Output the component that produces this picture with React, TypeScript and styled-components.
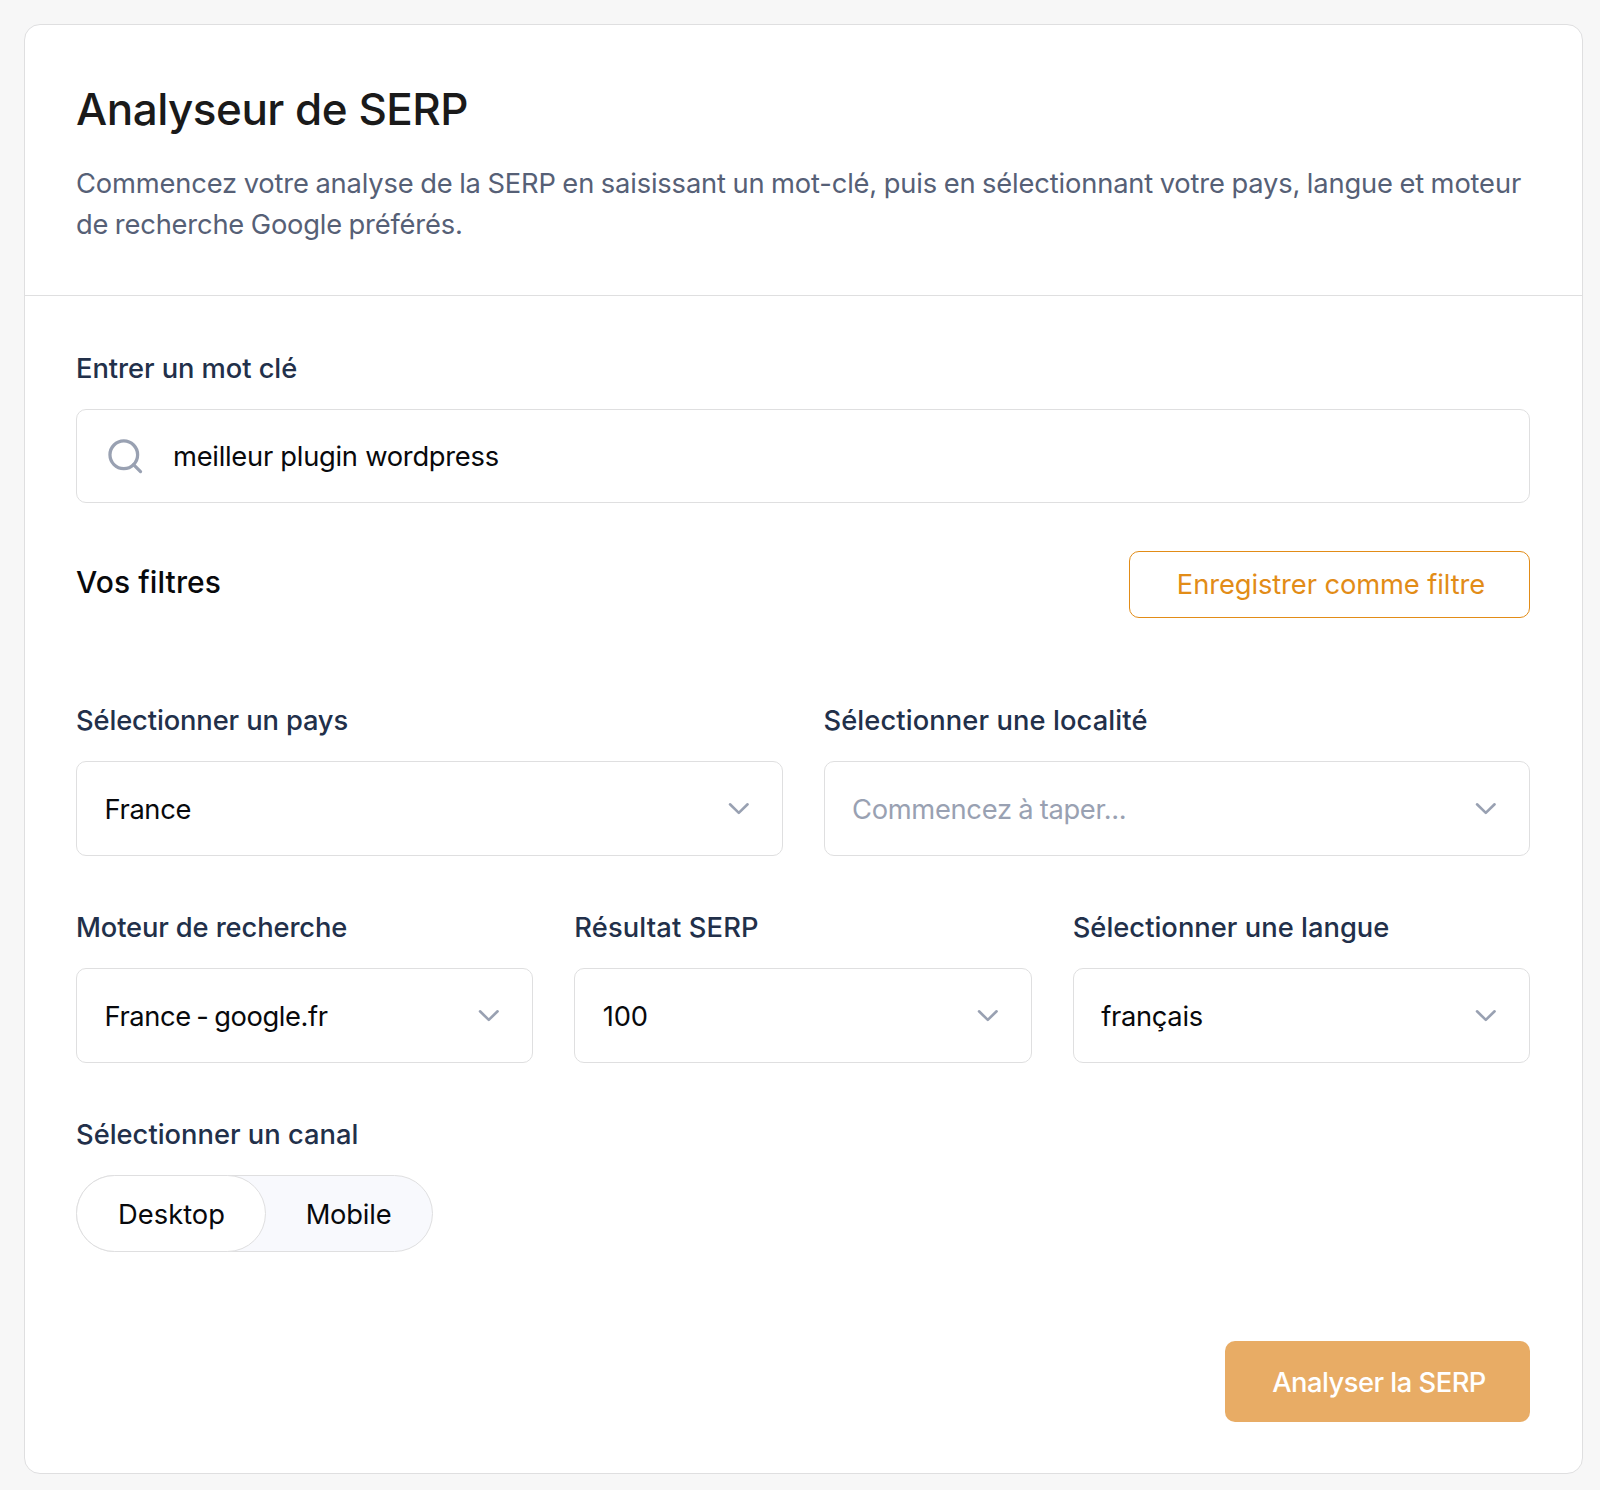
import React from "react";
import styled, { createGlobalStyle, css } from "styled-components";

const line = "#dfdfe0";
const navy = "#22304a";
const muted = "#99a1b2";
const accent = "#e28c17";

const GlobalStyle = createGlobalStyle`
  *, *::before, *::after { box-sizing: border-box; }
  body {
    margin: 0;
    background: #f7f7f7;
    font-family: Inter, "Liberation Sans", sans-serif;
    font-size: 27.3px;
    color: #08090c;
    -webkit-font-smoothing: antialiased;
  }
  h1, h2, p { margin: 0; font-weight: inherit; font-size: inherit; }
  button { font: inherit; color: inherit; cursor: pointer; }
`;

const Page = styled.main`
  padding: 24px 17px 16px 24px;
`;

const Card = styled.section`
  display: flex;
  flex-direction: column;
  height: 1450px;
  background: #fff;
  border: 1px solid ${line};
  border-radius: 16px;
`;

const Header = styled.header`
  padding: 56px 51px 50px;
  border-bottom: 1px solid ${line};
`;

const Title = styled.h1`
  && {
    font-size: 44px;
    font-weight: 500;
  }
  line-height: 56px;
  letter-spacing: -0.5px;
  color: #1a1a1a;
`;

const DescriptionLine = styled.span<{ $tracking: number }>`
  display: block;
  white-space: nowrap;
  letter-spacing: ${(p) => p.$tracking}px;
  word-spacing: -0.9px;
`;

const Description = styled.p`
  margin-top: 26px;
  line-height: 41px;
  color: #566076;
`;

const Body = styled.div`
  display: flex;
  flex-direction: column;
  flex: 1;
  padding: 54px 52px 51px 51px;
`;

const FieldBlock = styled.div`
  display: flex;
  flex-direction: column;
  min-width: 0;
`;

const Label = styled.label<{ $tracking: number }>`
  margin-bottom: 22px;
  line-height: 37px;
  font-weight: 500;
  white-space: nowrap;
  letter-spacing: ${(p) => p.$tracking}px;
  color: ${navy};
`;

const fieldBox = css`
  display: flex;
  align-items: center;
  border: 1px solid ${line};
  border-radius: 10px;
  background: #fff;
`;

const SearchBox = styled.div`
  ${fieldBox}
  height: 94px;
  padding: 0 28px;
`;

const SearchIcon = styled.svg`
  flex: none;
  width: 41px;
  height: 41px;
  margin-right: 27px;
`;

const Value = styled.span<{ $tracking: number; $wordGap?: number; $placeholder?: boolean }>`
  white-space: nowrap;
  letter-spacing: ${(p) => p.$tracking}px;
  word-spacing: ${(p) => p.$wordGap ?? 0}px;
  color: ${(p) => (p.$placeholder ? muted : "#08090c")};
`;

const SelectBox = styled.div`
  ${fieldBox}
  justify-content: space-between;
  height: 95px;
  padding: 0 32px 0 27.5px;

  ${Value} {
    padding-top: 2px;
  }
`;

const Chevron = styled.svg`
  flex: none;
  width: 23px;
  height: 14px;
`;

const FilterBar = styled.div`
  display: flex;
  justify-content: space-between;
  align-items: flex-start;
  margin-top: 48px;
`;

const FilterTitle = styled.h2`
  && {
    font-size: 30px;
    font-weight: 500;
  }
  line-height: 62px;
  letter-spacing: 0.09px;
`;

const SaveButton = styled.button`
  width: 401px;
  height: 67px;
  padding: 0 0 0 3px;
  border: 1px solid ${accent};
  border-radius: 10px;
  background: #fff;
  && { color: ${accent}; }
  letter-spacing: -0.09px;
`;

const Grid = styled.div<{ $columns: number; $top: number }>`
  display: grid;
  grid-template-columns: repeat(${(p) => p.$columns}, minmax(0, 1fr));
  gap: 41px;
  margin-top: ${(p) => p.$top}px;
`;

const ChannelBlock = styled(FieldBlock)`
  align-items: flex-start;
  margin-top: 53px;
`;

const Toggle = styled.div`
  display: flex;
  width: 357px;
  height: 77px;
  border: 1px solid ${line};
  border-radius: 39px;
  background: #f8f9fd;
`;

const ToggleOption = styled.button<{ $active?: boolean; $tracking: number }>`
  height: 77px;
  margin: -1px;
  padding: 2px 0 0 1px;
  border: 1px solid ${(p) => (p.$active ? line : "transparent")};
  border-radius: 39px;
  background: ${(p) => (p.$active ? "#fff" : "transparent")};
  width: ${(p) => (p.$active ? 190 : 168)}px;
  letter-spacing: ${(p) => p.$tracking}px;
`;

const Actions = styled.div`
  display: flex;
  justify-content: flex-end;
  margin-top: 89px;
`;

const SubmitButton = styled.button`
  width: 305px;
  height: 81px;
  padding: 2px 0 0 3px;
  border: 0;
  border-radius: 10px;
  background: #e8ac65;
  && {
    color: #fff;
    font-weight: 500;
  }
  letter-spacing: -0.49px;
`;

type SelectProps = {
  label: string;
  labelTracking: number;
  value: string;
  valueTracking: number;
  wordGap?: number;
  placeholder?: boolean;
};

function Select({ label, labelTracking, value, valueTracking, wordGap, placeholder }: SelectProps) {
  return (
    <FieldBlock>
      <Label $tracking={labelTracking}>{label}</Label>
      <SelectBox>
        <Value $tracking={valueTracking} $wordGap={wordGap} $placeholder={placeholder}>
          {value}
        </Value>
        <Chevron viewBox="0 0 23 14" fill="none">
          <path
            d="M3 2.3l8.8 8.6 8.8-8.6"
            stroke={muted}
            strokeWidth="2.6"
            strokeLinecap="round"
            strokeLinejoin="round"
          />
        </Chevron>
      </SelectBox>
    </FieldBlock>
  );
}

export default function App() {
  return (
    <>
      <GlobalStyle />
      <Page>
        <Card>
          <Header>
            <Title>Analyseur de SERP</Title>
            <Description>
              <DescriptionLine $tracking={-0.148}>
                Commencez votre analyse de la SERP en saisissant un mot-clé, puis en sélectionnant
                votre pays, langue et moteur
              </DescriptionLine>
              <DescriptionLine $tracking={-0.18}>de recherche Google préférés.</DescriptionLine>
            </Description>
          </Header>
          <Body>
            <FieldBlock>
              <Label $tracking={-0.06}>Entrer un mot clé</Label>
              <SearchBox>
                <SearchIcon viewBox="0 0 24 24" fill="none" stroke={muted} strokeWidth="1.9" strokeLinecap="round">
                  <circle cx="11" cy="11" r="8.1" />
                  <path d="M20.8 20.8l-4.1-4.1" />
                </SearchIcon>
                <Value $tracking={-0.26}>meilleur plugin wordpress</Value>
              </SearchBox>
            </FieldBlock>

            <FilterBar>
              <FilterTitle>Vos filtres</FilterTitle>
              <SaveButton type="button">Enregistrer comme filtre</SaveButton>
            </FilterBar>

            <Grid $columns={2} $top={84}>
              <Select label="Sélectionner un pays" labelTracking={-0.12} value="France" valueTracking={-0.35} />
              <Select
                label="Sélectionner une localité"
                labelTracking={0.1}
                value="Commencez à taper..."
                valueTracking={-0.3}
                wordGap={-0.9}
                placeholder
              />
            </Grid>

            <Grid $columns={3} $top={53}>
              <Select
                label="Moteur de recherche"
                labelTracking={-0.12}
                value="France - google.fr"
                valueTracking={-0.4}
                wordGap={-1.6}
              />
              <Select label="Résultat SERP" labelTracking={0.14} value="100" valueTracking={-0.16} />
              <Select label="Sélectionner une langue" labelTracking={0.03} value="français" valueTracking={-0.3} />
            </Grid>

            <ChannelBlock>
              <Label $tracking={0.01}>Sélectionner un canal</Label>
              <Toggle>
                <ToggleOption type="button" $active $tracking={0.04}>
                  Desktop
                </ToggleOption>
                <ToggleOption type="button" $tracking={-0.19}>
                  Mobile
                </ToggleOption>
              </Toggle>
            </ChannelBlock>

            <Actions>
              <SubmitButton type="button">Analyser la SERP</SubmitButton>
            </Actions>
          </Body>
        </Card>
      </Page>
    </>
  );
}
